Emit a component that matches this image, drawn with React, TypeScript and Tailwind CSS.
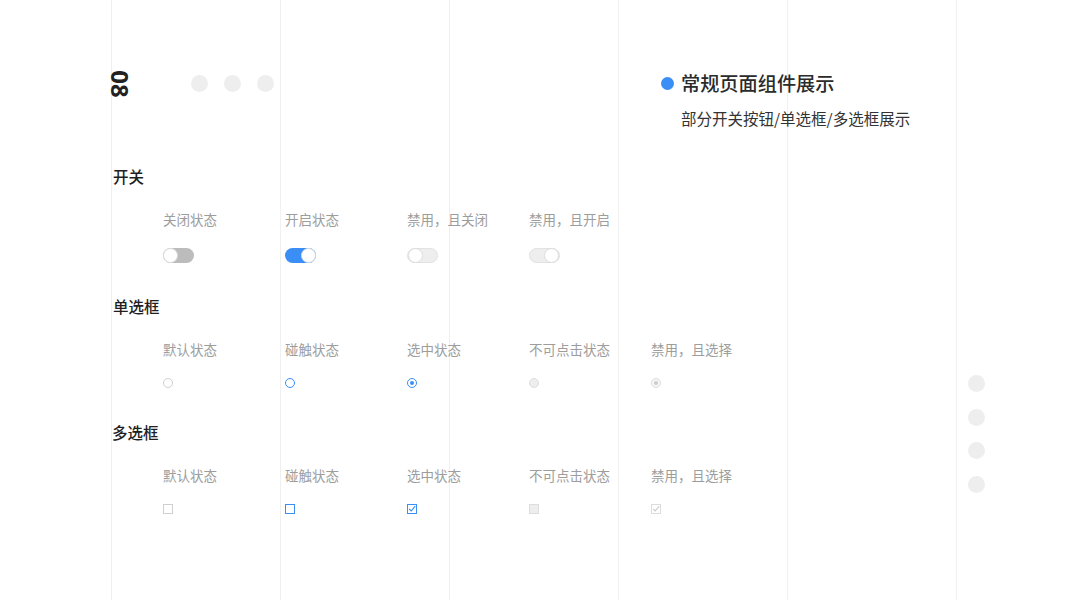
import React from 'react';

const FONT = "font-['Noto_Sans_CJK_SC','Noto_Sans',sans-serif]";

type SwitchState = 'off' | 'on' | 'disabledOff' | 'disabledOn';
type BoxState = 'default' | 'hover' | 'checked' | 'disabled' | 'disabledChecked';

const SWITCHES: { label: string; state: SwitchState }[] = [
    { label: '关闭状态', state: 'off' },
    { label: '开启状态', state: 'on' },
    { label: '禁用，且关闭', state: 'disabledOff' },
    { label: '禁用，且开启', state: 'disabledOn' },
];

const BOXES: { label: string; state: BoxState }[] = [
    { label: '默认状态', state: 'default' },
    { label: '碰触状态', state: 'hover' },
    { label: '选中状态', state: 'checked' },
    { label: '不可点击状态', state: 'disabled' },
    { label: '禁用，且选择', state: 'disabledChecked' },
];

const Toggle: React.FC<{ state: SwitchState }> = ({ state }) => {
    const on = state === 'on' || state === 'disabledOn';
    const track =
        state === 'off' ? 'bg-[#bcbcbc]' : state === 'on' ? 'bg-[#3a8ef6]' : 'bg-[#eeeeee] border border-[#e2e2e2]';
    return (
        <div className={`w-[31px] h-[15px] rounded-full flex items-center ${track} ${on ? 'justify-end' : 'justify-start'}`}>
            <div className="w-[15px] h-[15px] rounded-full bg-white border border-[#dcdcdc] shrink-0" />
        </div>
    );
};

const Radio: React.FC<{ state: BoxState }> = ({ state }) => {
    const cls: Record<BoxState, string> = {
        default: 'border border-[#cfcfcf] bg-white',
        hover: 'border-[1.5px] border-[#3a8ef6] bg-white',
        checked: 'border-[1.5px] border-[#3a8ef6] bg-white',
        disabled: 'border border-[#dddddd] bg-[#eeeeee]',
        disabledChecked: 'border border-[#dddddd] bg-[#f6f6f6]',
    };
    return (
        <div className={`w-[10px] h-[10px] rounded-full flex items-center justify-center ${cls[state]}`}>
            {state === 'checked' && <div className="w-[4px] h-[4px] rounded-full bg-[#3a8ef6]" />}
            {state === 'disabledChecked' && <div className="w-[4px] h-[4px] rounded-full bg-[#cccccc]" />}
        </div>
    );
};

const Checkbox: React.FC<{ state: BoxState }> = ({ state }) => {
    const cls: Record<BoxState, string> = {
        default: 'border border-[#cfcfcf] bg-white',
        hover: 'border-[1.5px] border-[#3a8ef6] bg-white',
        checked: 'border-[1.5px] border-[#3a8ef6] bg-white',
        disabled: 'border border-[#dddddd] bg-[#eeeeee]',
        disabledChecked: 'border border-[#dddddd] bg-white',
    };
    const tick = state === 'checked' ? '#3a8ef6' : '#cccccc';
    return (
        <div className={`w-[10px] h-[10px] flex items-center justify-center ${cls[state]}`}>
            {(state === 'checked' || state === 'disabledChecked') && (
                <svg viewBox="0 0 10 10" className="w-[8px] h-[8px]">
                    <path d="M1.5 5 L4 7.5 L9 1.5" fill="none" stroke={tick} strokeWidth="1.4" />
                </svg>
            )}
        </div>
    );
};

const Section: React.FC<{ title: string; top: string; titleMl?: string; children: React.ReactNode }> = ({ title, top, titleMl = 'ml-[2px]', children }) => (
    <div className={top}>
        <h3 className={`${titleMl} text-[15.5px] leading-[24px] font-medium text-[#1f1f1f]`}>{title}</h3>
        {children}
    </div>
);

const Labels: React.FC<{ items: string[] }> = ({ items }) => (
    <div className="mt-[21px] ml-[53px] flex">
        {items.map((t) => (
            <div key={t} className="w-[122px] text-[13.5px] leading-[20px] text-[#9d9d9d] whitespace-nowrap">{t}</div>
        ))}
    </div>
);

const App: React.FC = () => {
    return (
        <div className={`relative w-full h-[600px] bg-white overflow-hidden ${FONT}`}>
            {/* background column lines */}
            <div className="absolute inset-0 flex pl-[111px] pointer-events-none">
                {[0, 1, 2, 3, 4].map((i) => (
                    <div key={i} className="w-[169px] h-full border-l border-[#f0f0f0]" />
                ))}
                <div className="flex-1 h-full border-l border-[#f0f0f0]" />
            </div>

            <div className="relative pl-[110px]">
                {/* header */}
                <div className="flex items-start pt-[69px]">
                    <div className="w-[19px] h-[30px] flex items-center justify-center">
                        <span className="rotate-90 whitespace-nowrap text-[24px] leading-none font-bold text-[#222] font-['Noto_Sans',sans-serif]">08</span>
                    </div>
                    <div className="flex gap-[16px] ml-[62px] mt-[6px]">
                        {[0, 1, 2].map((i) => (
                            <div key={i} className="w-[17px] h-[17px] rounded-full bg-[#eeeeee]" />
                        ))}
                    </div>
                    <div className="ml-[387px]">
                        <div className="flex items-center">
                            <div className="w-[13px] h-[13px] rounded-full bg-[#3a8ef6]" />
                            <h1 className="ml-[7px] text-[19.2px] leading-[28px] font-medium text-[#2b2b2b]">常规页面组件展示</h1>
                        </div>
                        <p className="mt-[9px] ml-[20px] text-[15.5px] leading-[24px] text-[#333]">部分开关按钮/单选框/多选框展示</p>
                    </div>
                </div>

                {/* body */}
                <div className="flex">
                    <div className="flex-1">
                        <Section title="开关" top="mt-[34px]" titleMl="ml-[3px]">
                            <Labels items={SWITCHES.map((s) => s.label)} />
                            <div className="mt-[19px] ml-[53px] flex">
                                {SWITCHES.map((s) => (
                                    <div key={s.label} className="w-[122px]">
                                        <Toggle state={s.state} />
                                    </div>
                                ))}
                            </div>
                        </Section>

                        <Section title="单选框" top="mt-[31px]" titleMl="ml-[3px]">
                            <Labels items={BOXES.map((b) => b.label)} />
                            <div className="mt-[19px] ml-[53px] flex">
                                {BOXES.map((b) => (
                                    <div key={b.label} className="w-[122px]">
                                        <Radio state={b.state} />
                                    </div>
                                ))}
                            </div>
                        </Section>

                        <Section title="多选框" top="mt-[32px]" titleMl="ml-[2px]">
                            <Labels items={BOXES.map((b) => b.label)} />
                            <div className="mt-[19px] ml-[53px] flex">
                                {BOXES.map((b) => (
                                    <div key={b.label} className="w-[122px]">
                                        <Checkbox state={b.state} />
                                    </div>
                                ))}
                            </div>
                        </Section>
                    </div>

                    <div className="w-[17px] mr-[82px] pt-[245px] flex flex-col gap-[16.5px]">
                        {[0, 1, 2, 3].map((i) => (
                            <div key={i} className="w-[17px] h-[17px] rounded-full bg-[#eeeeee]" />
                        ))}
                    </div>
                </div>
            </div>
        </div>
    );
};

export default App;
